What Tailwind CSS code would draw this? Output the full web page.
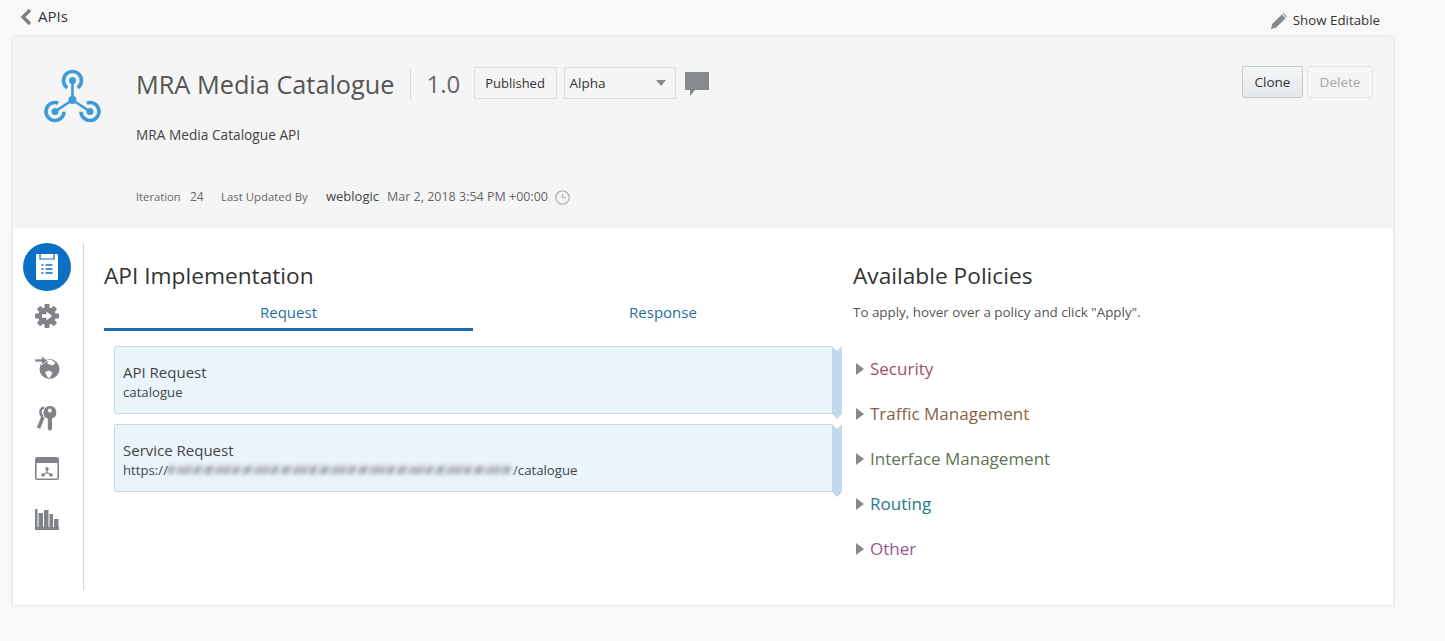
<!DOCTYPE html>
<html lang="en">
<head>
  <meta charset="UTF-8">
  <title>MRA Media Catalogue</title>
  <script src="https://cdn.jsdelivr.net/npm/@tailwindcss/browser@4"></script>
</head>
<body class="bg-[#f8f8f8] font-['Open_Sans',sans-serif] text-[#333] h-[641px] overflow-hidden">

  <!-- top bar -->
  <div class="h-[37px] w-[1393px] pl-[20px] flex justify-between">
    <a class="flex items-center gap-[6px] h-[33px] text-[15px] text-[#333]">
      <svg width="12" height="16" viewBox="0 0 12 16"><path d="M10 1 3 8l7 7" fill="none" stroke="#7b7f83" stroke-width="3.400"/></svg>
      APIs
    </a>
    <div class="flex items-center gap-[6px] h-[41px] pr-[13px] text-[13.300px] text-[#333]">
      <svg width="16" height="16" viewBox="0 0 16 16"><path d="M0 16l1.200-5L10.800 1.400l3.800 3.800L5 14.800z M11.600.6l.8-.6 3.600 3.600-.7.800z" fill="#85898d"/></svg>
      Show Editable
    </div>
  </div>

  <div class="ml-[13px] w-[1380px] h-[568px] bg-white shadow-[0_0_3px_rgba(0,0,0,0.16)]">

    <!-- header -->
    <div class="h-[191px] bg-[#f5f5f6] flex relative">
      <div class="w-[123px] pl-[29px] pt-[32px] shrink-0">
        <svg width="61" height="56" viewBox="0 0 61 56" fill="none">
          <path d="M30.500 31V11.500M30.500 31 13 42.500M30.500 31 48 42.500" stroke="#3e9bd5" stroke-width="2.600"/>
          <g stroke="#3e9bd5" stroke-width="3.600">
            <path d="M25.340 18.870A9 9 0 1 1 35.660 18.870"/>
            <path d="M22 42.660A9 9 0 1 1 16.230 34.100"/>
            <path d="M39 42.660A9 9 0 1 0 44.770 34.100"/>
          </g>
          <g fill="#3e9bd5">
            <circle cx="30.500" cy="31" r="4"/>
            <circle cx="30.500" cy="11.500" r="3.500"/>
            <circle cx="13" cy="42.500" r="3.500"/>
            <circle cx="48" cy="42.500" r="3.500"/>
          </g>
        </svg>
      </div>
      <div class="flex-1">
        <div class="flex items-start pt-[29px] h-[70px]">
          <h1 class="text-[25.300px] leading-[38px] whitespace-nowrap text-[#555] pr-[15px] border-r border-[#dcdcdc] h-[31px] mt-[3px]"><span class="relative -top-[4px]">MRA Media Catalogue</span></h1>
          <span class="w-[63px] text-[24px] leading-[38px] text-[#666] pl-[16px] relative -top-[1px]">1.0</span>
          <span class="h-[32px] w-[83px] border border-[#dcdfe1] flex items-center justify-center pt-[2px] text-[13px] text-[#333] mt-[1px]">Published</span>
          <div class="h-[32px] w-[112px] ml-[7px] mt-[1px] border border-[#d9dcde] flex items-center justify-between pl-[5px] pr-[9px] text-[13.500px] text-[#333]">
            Alpha
            <svg width="10" height="6" viewBox="0 0 10 6"><path d="M0 0h10L5 6z" fill="#85898d"/></svg>
          </div>
          <svg class="ml-[9px] mt-[6px]" width="24" height="24" viewBox="0 0 24 24"><path d="M0 0h24v18H10l-5 6v-6H0z" fill="#868a8e"/></svg>
        </div>
        <p class="text-[13.700px] leading-[18px] text-[#444] pt-[19px]">MRA Media Catalogue API</p>
        <div class="flex items-center h-[20px] mt-[43px] text-[#666] whitespace-nowrap">
          <span class="w-[54px] text-[11.200px]">Iteration</span>
          <span class="w-[31px] text-[12px]">24</span>
          <span class="w-[105px] text-[11.400px]">Last Updated By</span>
          <span class="w-[61px] text-[13px] text-[#444]">weblogic</span>
          <span class="text-[12.500px]">Mar 2, 2018 3:54 PM +00:00</span>
          <svg class="ml-[7px]" width="15" height="15" viewBox="0 0 15 15" fill="none" stroke="#b4b4b4" stroke-width="1.300"><circle cx="7.500" cy="7.500" r="6.700"/><path d="M7.500 3.500v4.200h3.500"/></svg>
        </div>
      </div>
      <div class="absolute right-[20px] top-[29px] flex gap-[4px]">
        <button class="w-[61px] h-[32px] border border-[#c4cbd0] rounded-[2px] bg-gradient-to-b from-[#f4f6f7] to-[#e4e8ea] text-[13.500px] text-[#333]">Clone</button>
        <button class="w-[66px] h-[32px] border border-[#e3e5e7] rounded-[2px] text-[13.500px] text-[#a6a6a6]">Delete</button>
      </div>
    </div>

    <!-- body -->
    <div class="flex pt-[15px]">
      <nav class="w-[71px] h-[347px] border-r border-[#d6d6d6] shrink-0 flex flex-col items-center pr-[2px]">
        <div class="w-[48px] h-[48px] rounded-full bg-[#0b6fc4] flex items-center justify-center">
          <svg width="22" height="26" viewBox="0 0 22 26">
            <path d="M1 0h20a1 1 0 0 1 1 1v24a1 1 0 0 1-1 1H1a1 1 0 0 1-1-1V1a1 1 0 0 1 1-1z" fill="#fff"/>
            <path d="M4 0v5h14V0" fill="none" stroke="#0b6fc4" stroke-width="1.200"/>
            <path d="M5.500 11h2M9.500 11h7M5.500 15h2M9.500 15h7M5.500 19h2M9.500 19h7" stroke="#0b6fc4" stroke-width="1.600"/>
          </svg>
        </div>
        <!-- gear -->
        <svg class="mt-[13px]" width="24" height="24" viewBox="0 0 24 24" fill="#808488">
          <circle cx="12" cy="12" r="8.800"/>
          <rect x="9.500" y="0" width="5" height="24" rx=".8"/>
          <rect x="9.500" y="0" width="5" height="24" rx=".8" transform="rotate(45 12 12)"/>
          <rect x="9.500" y="0" width="5" height="24" rx=".8" transform="rotate(90 12 12)"/>
          <rect x="9.500" y="0" width="5" height="24" rx=".8" transform="rotate(135 12 12)"/>
          <path d="M7 10.300h4.500V7.500l5.500 4.500-5.500 4.500v-2.800H7z" fill="#fff"/>
        </svg>
        <!-- globe -->
        <svg class="mt-[28px]" width="25" height="24" viewBox="0 0 25 24">
          <circle cx="14.500" cy="13" r="10" fill="#808488"/>
          <path d="M12.500 3.500l4 .5 4 3-3 2.500-2.500-1-2.500-.5zM10 16l4.500-1.500 3 2.500-3 5.500-2-1.500z" fill="#fff"/>
          <path d="M0 3h6.500V0l6 4.500-6 4.500V6H0z" fill="#808488" stroke="#fff" stroke-width=".7"/>
        </svg>
        <!-- keys -->
        <svg class="mt-[26px]" width="20" height="25" viewBox="0 0 20 25">
          <path d="M7 1.500C4 2 3 5 3.500 7.500L5.500 11" fill="none" stroke="#808488" stroke-width="2.600"/>
          <path d="M6 11 1.500 22" fill="none" stroke="#808488" stroke-width="3.600"/>
          <path fill="#808488" fill-rule="evenodd" d="M12.800 0a6.500 6.500 0 0 1 2.200 12.600V23l-1.200 1.500h-1.600L10.800 23V12.600A6.500 6.500 0 0 1 12.800 0zm0 2.500a2 2 0 1 0 0 4 2 2 0 0 0 0-4z"/>
        </svg>
        <!-- deployment window -->
        <svg class="mt-[26px]" width="24" height="23" viewBox="0 0 24 23">
          <rect x=".8" y=".8" width="22.400" height="21.400" rx="1.500" fill="none" stroke="#808488" stroke-width="1.600"/>
          <path d="M1 1h22v5H1z" fill="#808488"/>
          <path d="M12 12v3.500M12 15.500l-3.500 2M12 15.500l3.500 2" stroke="#808488" stroke-width="1.200"/>
          <circle cx="12" cy="12" r="1.800" fill="#808488"/><circle cx="8" cy="18" r="1.800" fill="#808488"/><circle cx="16" cy="18" r="1.800" fill="#808488"/>
        </svg>
        <!-- analytics -->
        <svg class="mt-[29px]" width="24" height="21" viewBox="0 0 24 21" fill="#808488">
          <path d="M0 0h2.500v18H24v3H0z"/><path d="M3.500 4H8v14H3.500zM9 1h4.500v17H9zM14.500 5h3.500v13h-3.500zM19 10h4.500v8H19z"/>
        </svg>
      </nav>

      <!-- implementation -->
      <div class="w-[769px] pl-[20px] shrink-0">
        <h2 class="text-[22.700px] leading-[28px] text-[#333] pt-[19px] box-content">API Implementation</h2>
        <div class="flex w-[749px] mt-[10px] text-[15px] text-[#1f6ea5]">
          <a class="w-[369px] h-[31px] text-center border-b-[3px] border-[#1c6db0] leading-[24px]">Request</a>
          <a class="w-[380px] h-[31px] text-center leading-[24px]">Response</a>
        </div>
        <div class="ml-[10px] mt-[15px] flex flex-col gap-[10px] w-[719px]">
          <div class="relative h-[68px] bg-[#e9f4fb] border border-[#c5d9e8] rounded-[2px] pl-[8px] pt-[15px] pr-[10px]">
            <div class="text-[15px] leading-[21px] text-[#444]">API Request</div>
            <div class="text-[13.200px] leading-[18px] text-[#444]">catalogue</div>
            <span class="absolute -right-[10px] -top-[1px] w-[10px] h-[73px] bg-[#c3d8ec] [clip-path:polygon(0_0,50%_5px,100%_0,100%_calc(100%-5px),50%_100%,0_calc(100%-5px))]"></span>
          </div>
          <div class="relative h-[68px] bg-[#e9f4fb] border border-[#c5d9e8] rounded-[2px] pl-[8px] pt-[15px] pr-[10px]">
            <div class="text-[15px] leading-[21px] text-[#444]">Service Request</div>
            <div class="flex items-center text-[13.200px] leading-[18px] whitespace-nowrap text-[#444]">https://<span class="inline-block w-[345px] h-[8px] blur-[2px] bg-[repeating-linear-gradient(115deg,#a4a9ae_0,#a4a9ae_7px,#e3e9ed_7px,#e3e9ed_10px,#b4b9bd_10px,#b4b9bd_24px,#e3e9ed_24px,#e3e9ed_26px,#9da2a7_26px,#9da2a7_31px,#e3e9ed_31px,#e3e9ed_35px)]"></span>/catalogue</div>
            <span class="absolute -right-[10px] -top-[1px] w-[10px] h-[73px] bg-[#c3d8ec] [clip-path:polygon(0_0,50%_5px,100%_0,100%_calc(100%-5px),50%_100%,0_calc(100%-5px))]"></span>
          </div>
        </div>
      </div>

      <!-- policies -->
      <div class="pt-[19px]">
        <h2 class="text-[22.700px] leading-[28px] text-[#333]">Available Policies</h2>
        <p class="text-[13.400px] leading-[18px] text-[#555] mt-[13px]">To apply, hover over a policy and click "Apply".</p>
        <ul class="mt-[25px] pl-[3px] text-[17px]">
          <li class="flex items-center gap-[6px] h-[45px] text-[#a34f68]"><svg class="shrink-0" width="8" height="12" viewBox="0 0 8 12"><path d="M0 0l8 6-8 6z" fill="#85898d"/></svg>Security</li>
          <li class="flex items-center gap-[6px] h-[45px] text-[#8a6246]"><svg class="shrink-0" width="8" height="12" viewBox="0 0 8 12"><path d="M0 0l8 6-8 6z" fill="#85898d"/></svg>Traffic Management</li>
          <li class="flex items-center gap-[6px] h-[45px] text-[#5f7350]"><svg class="shrink-0" width="8" height="12" viewBox="0 0 8 12"><path d="M0 0l8 6-8 6z" fill="#85898d"/></svg>Interface Management</li>
          <li class="flex items-center gap-[6px] h-[45px] text-[#1f7a8c]"><svg class="shrink-0" width="8" height="12" viewBox="0 0 8 12"><path d="M0 0l8 6-8 6z" fill="#85898d"/></svg>Routing</li>
          <li class="flex items-center gap-[6px] h-[45px] text-[#95588f]"><svg class="shrink-0" width="8" height="12" viewBox="0 0 8 12"><path d="M0 0l8 6-8 6z" fill="#85898d"/></svg>Other</li>
        </ul>
      </div>
    </div>
  </div>
</body>
</html>
